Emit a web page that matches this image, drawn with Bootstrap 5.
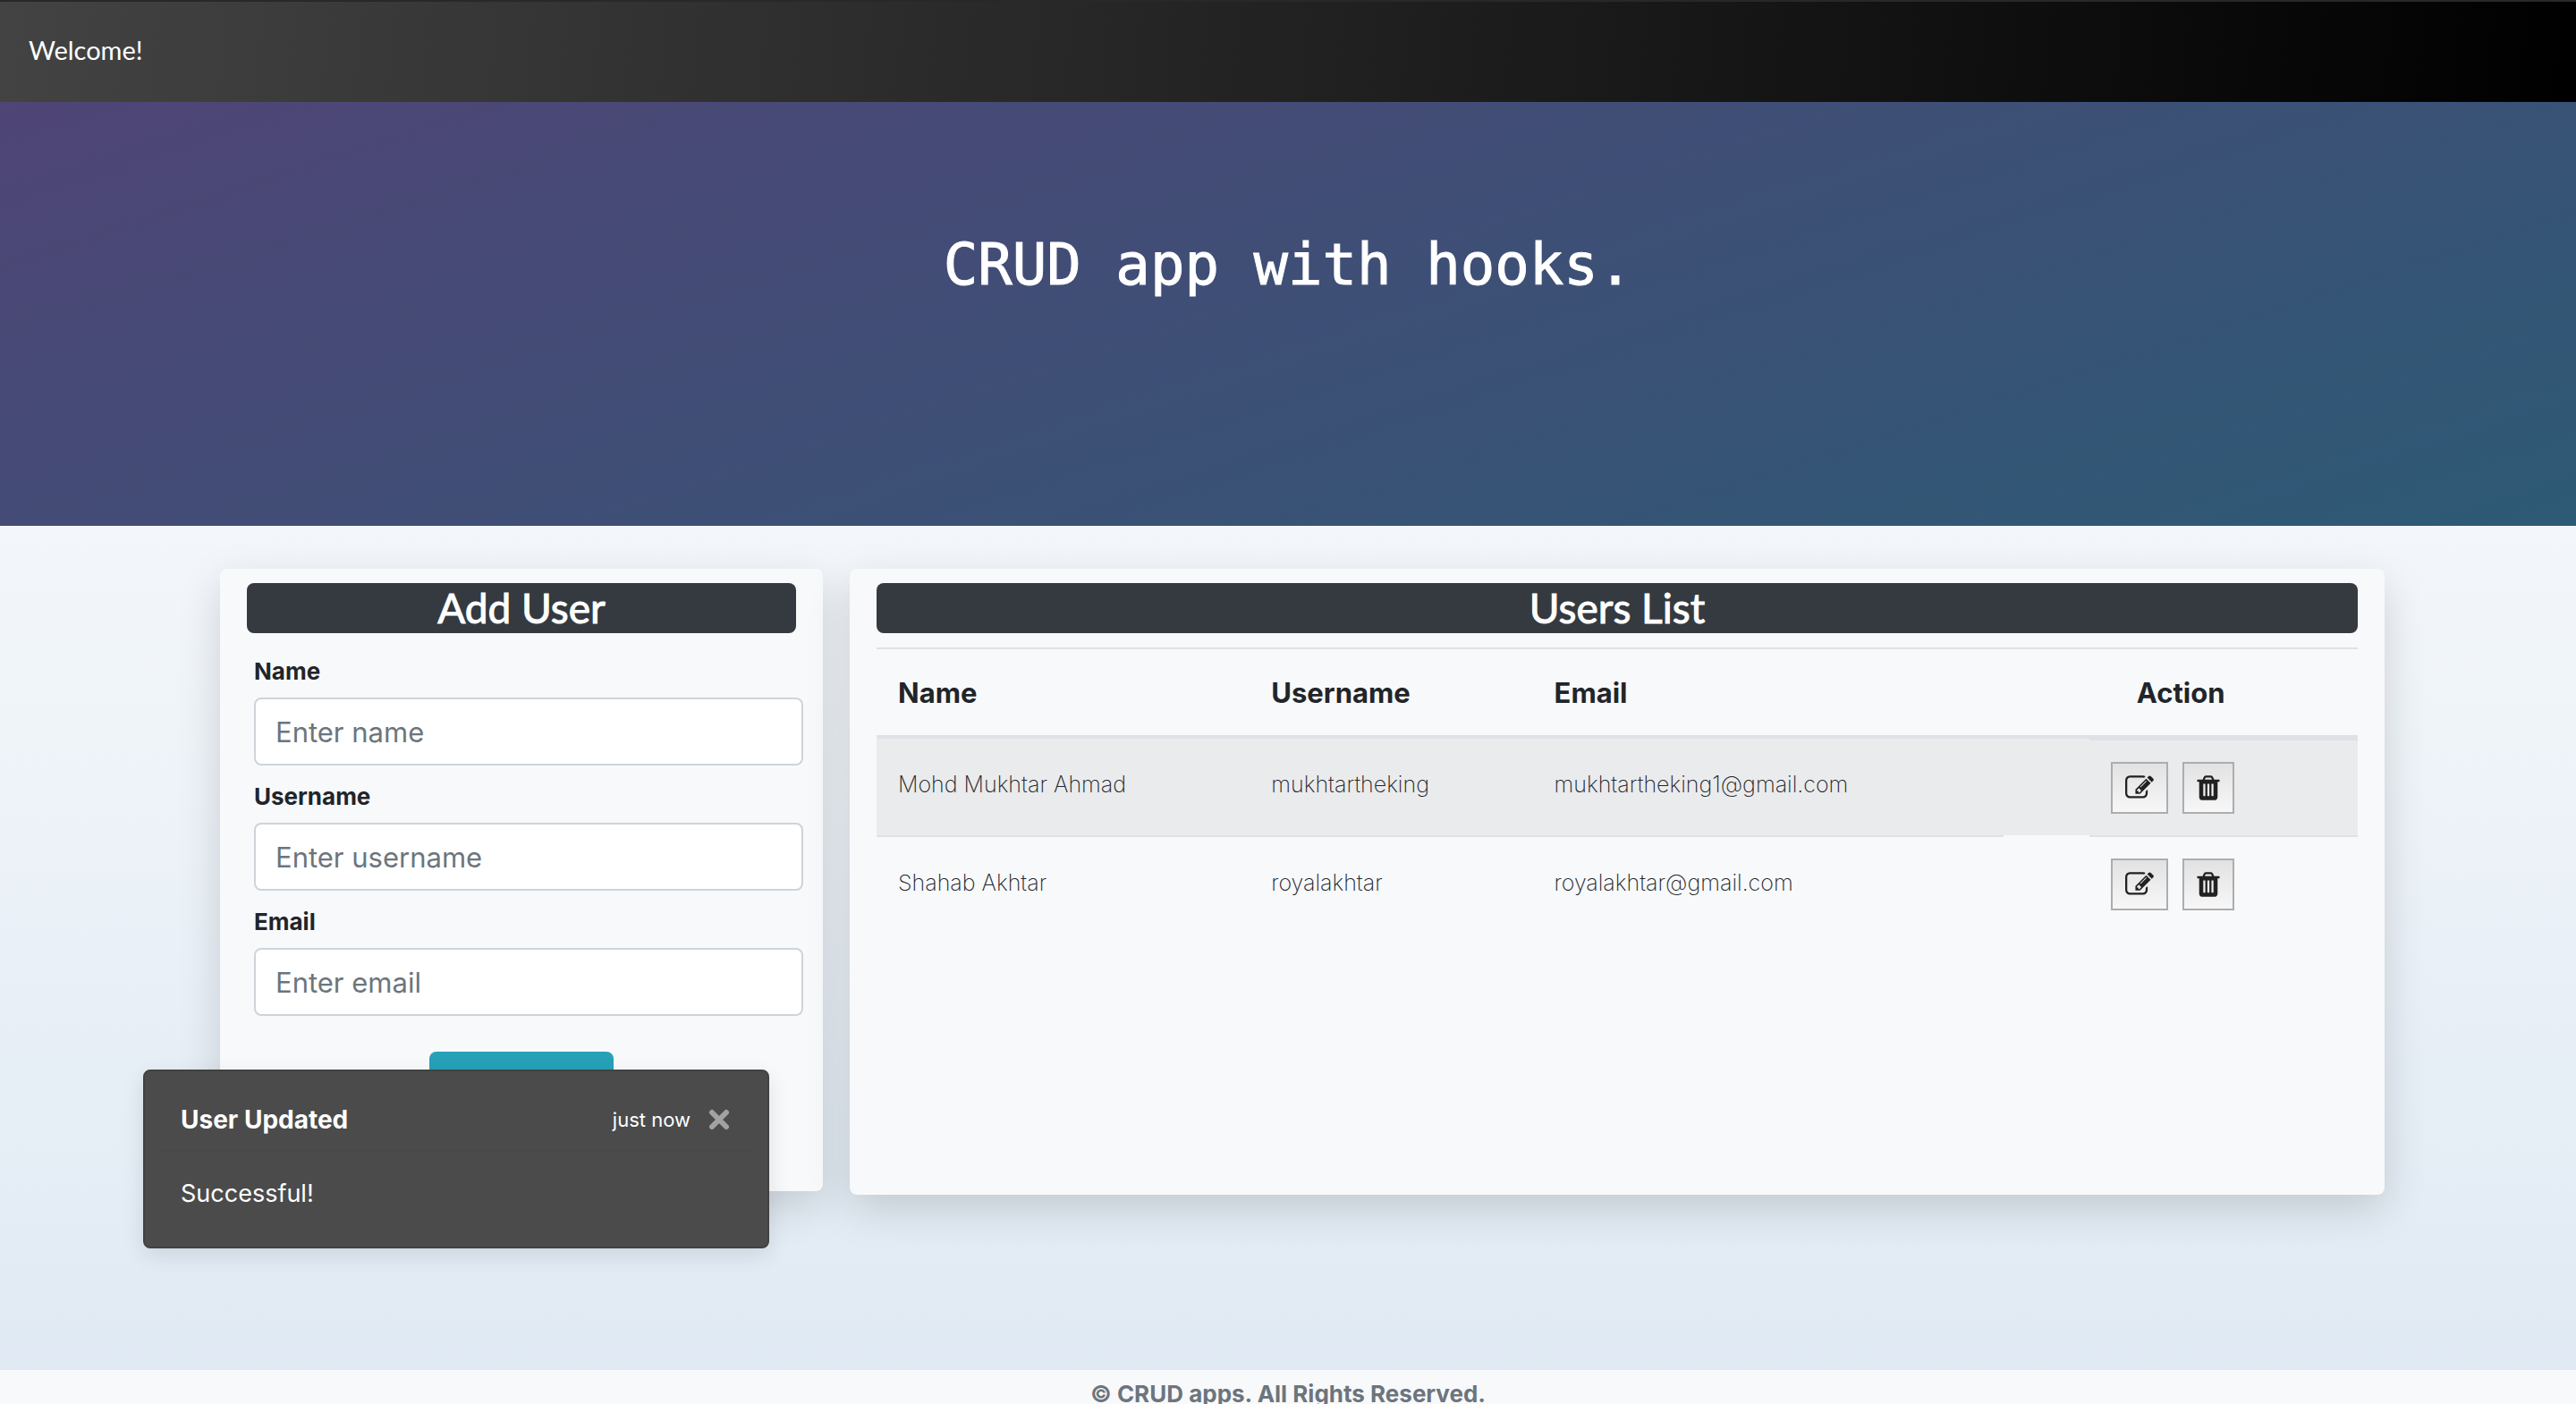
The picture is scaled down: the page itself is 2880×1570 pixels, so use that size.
<!DOCTYPE html>
<html lang="en">
<head>
<meta charset="utf-8">
<meta name="viewport" content="width=device-width, initial-scale=1">
<title>CRUD app with hooks</title>
<link href="https://cdn.jsdelivr.net/npm/bootstrap@5.3.0/dist/css/bootstrap.min.css" rel="stylesheet">
<style>
  html { font-size: 32px; }
  ::-webkit-scrollbar { display: none; }
  body { font-family: Inter, "Liberation Sans", sans-serif; color: #212529; background: linear-gradient(to top, #dfe9f3 0%, #fff 100%); min-height: 100vh; }
  .top-bar { background: linear-gradient(97deg, #434343 0%, #000 100%); border-top: 2px solid #282828; padding: 26px 32px 30px; min-height: 114px; }
  .brand-text { font: 400 29px/56px Lato, sans-serif; color: #fff; text-decoration: none; }
  .hero { background: linear-gradient(162deg, #4f4576 0%, #3e4f76 50%, #2d5a75 100%); min-height: 474px; padding-top: 144px; }
  .hero-title { font: 400 64px/77px "DejaVu Sans Mono", monospace; color: #fff; -webkit-text-stroke: 1px #fff; }
  .content-row { display: grid; grid-template-columns: 674fr 1716fr; align-items: start; padding: 48px 214px 196px 246px; gap: 30px; }
  .panel { background: #f8f9fb; border-radius: 8px; padding: 16px 30px; box-shadow: 0 16px 48px rgba(0,0,0,.15); }
  .form-panel { min-height: 696px; }
  .list-panel { min-height: 700px; }
  .panel-title { font: 400 46px/56px Lato, sans-serif; -webkit-text-stroke: 1px #fff; background: #343a40; color: #fff; border-radius: 8px; }
  .user-form { margin: 24px -8px 0 8px; }
  .user-form label { font-size: 26px; font-weight: 700; line-height: 38px; margin-bottom: 10px; }
  .user-form .form-control { height: 76px; font-size: 31px; border: 2px solid #ced4da; border-radius: 8px; padding: 0 22px; background: #fff; }
  .user-form .form-control::placeholder { color: #6c757d; }
  .field { margin-bottom: 16px; }
  .btn-send { width: 206px; height: 76px; background: #26a1b8; border-radius: 8px; margin-top: 24px; }
  .users { margin: 16px 0 0; table-layout: fixed; border-collapse: separate; border-spacing: 0; width: 100%; }
  .users th { font-size: 31px; font-weight: 700; line-height: 50px; padding: 24px 24px 22px; border-top: 2px solid #dee2e6; border-bottom: 4px solid #dee2e6; }
  .users td { font-size: 25px; font-weight: 200; line-height: 54px; padding: 24px; border-bottom: 2px solid #dee2e6; white-space: nowrap; vertical-align: top; }
  .users .shaded td { background: #eaebed; }
  .users tr:last-child td { border-bottom: 0; }
  .users td.spacer { border-bottom-color: #f8f9fb; }
  .users td.tools { line-height: 0; }
  .shaded td.tools { border-top: 2px solid #dee2e6; }
  .tool { height: 58px; width: 58px; padding: 0; border: 2px solid #acadaf; border-radius: 0; background: linear-gradient(#e2e2e2, #f7f7f7); }
  .tool-edit { width: 64px; }
  .tool svg { display: block; margin: 0 auto; }
  .site-footer { background: #f8f9fb; color: #6c757d; font-size: 26px; font-weight: 700; line-height: 38px; padding: 8px 0; }
  .notice { position: absolute; left: 160px; top: 1196px; width: 700px; min-height: 200px; background: #4b4b4b; border: 2px solid #424242; border-radius: 8px; padding: 16px; color: #fff; box-shadow: 0 8px 24px rgba(0,0,0,.1); }
  .notice-head { height: 74px; padding: 4px 26px 0 24px; border-bottom: 2px solid #484848; }
  .notice-head strong { font-size: 28px; }
  .notice-head small { font-size: 22px; }
  .notice-body { font-size: 27px; line-height: 42px; padding: 26px 24px 22px; }
  .notice-close { background: none; border: 0; padding: 0; margin-left: 20px; width: 24px; line-height: 0; }
</style>
<script src="https://cdn.jsdelivr.net/npm/bootstrap@5.3.0/dist/js/bootstrap.bundle.min.js"></script>
</head>
<body>
<svg width="0" height="0" class="position-absolute" aria-hidden="true">
  <symbol id="i-edit" viewBox="0 0 1792 1792"><path d="M888 1184l116-116-152-152-116 116v56h96v96h56zm440-720q-16-16-33 1l-350 350q-17 17-1 33t33-1l350-350q17-17 1-33zm80 594v190q0 119-84.500 203.500t-203.500 84.500h-832q-119 0-203.500-84.500t-84.500-203.500v-832q0-119 84.500-203.500t203.500-84.500h832q63 0 117 25 15 7 18 23 3 17-9 29l-49 49q-14 14-32 8-23-6-45-6h-832q-66 0-113 47t-47 113v832q0 66 47 113t113 47h832q66 0 113-47t47-113v-126q0-13 9-22l64-64q15-15 35-7t20 29zm-96-738l288 288-672 672h-288v-288zm444 132l-92 92-288-288 92-92q28-28 68-28t68 28l152 152q28 28 28 68t-28 68z"/></symbol>
  <symbol id="i-trash" viewBox="0 0 1792 1792"><path d="M704 1376v-704q0-14-9-23t-23-9h-64q-14 0-23 9t-9 23v704q0 14 9 23t23 9h64q14 0 23-9t9-23zm256 0v-704q0-14-9-23t-23-9h-64q-14 0-23 9t-9 23v704q0 14 9 23t23 9h64q14 0 23-9t9-23zm256 0v-704q0-14-9-23t-23-9h-64q-14 0-23 9t-9 23v704q0 14 9 23t23 9h64q14 0 23-9t9-23zm-544-992h448l-48-117q-7-9-17-11h-317q-10 2-17 11zm928 32v64q0 14-9 23t-23 9h-96v948q0 83-47 143.500t-113 60.500h-832q-66 0-113-58.500t-47-141.500v-952h-96q-14 0-23-9t-9-23v-64q0-14 9-23t23-9h309l70-167q15-37 54-63t79-26h320q40 0 79 26t54 63l70 167h309q14 0 23 9t9 23z"/></symbol>
</svg>
<nav class="top-bar d-flex align-items-center"><a class="brand-text" href="#">Welcome!</a></nav>
<header class="hero text-center"><h1 class="hero-title m-0">CRUD app with hooks.</h1></header>
<main class="content-row">
  <section class="panel form-panel">
    <h2 class="panel-title text-center m-0">Add User</h2>
    <form class="user-form">
      <div class="field"><label class="d-block" for="name">Name</label><input class="form-control" id="name" type="text" placeholder="Enter name"></div>
      <div class="field"><label class="d-block" for="username">Username</label><input class="form-control" id="username" type="text" placeholder="Enter username"></div>
      <div class="field"><label class="d-block" for="email">Email</label><input class="form-control" id="email" type="email" placeholder="Enter email"></div>
      <div class="d-flex justify-content-center pe-2"><button class="btn btn-send" type="submit" aria-label="Add"></button></div>
    </form>
  </section>
  <section class="panel list-panel">
    <h2 class="panel-title text-center m-0">Users List</h2>
    <table class="users">
      <colgroup><col style="width:25.2%"><col style="width:19.1%"><col style="width:31.8%"><col style="width:5.8%"><col></colgroup>
      <thead><tr><th>Name</th><th>Username</th><th>Email</th><th colspan="2" class="text-center">Action</th></tr></thead>
      <tbody>
        <tr class="shaded"><td>Mohd Mukhtar Ahmad</td><td>mukhtartheking</td><td>mukhtartheking1@gmail.com</td><td class="spacer"></td>
          <td class="tools"><div class="d-flex gap-2"><button class="tool tool-edit" type="button" aria-label="Edit"><svg width="32" height="32" fill="#212121"><use href="#i-edit"/></svg></button><button class="tool" type="button" aria-label="Delete"><svg width="32" height="32" fill="#212121"><use href="#i-trash"/></svg></button></div></td></tr>
        <tr><td>Shahab Akhtar</td><td>royalakhtar</td><td>royalakhtar@gmail.com</td><td class="spacer"></td>
          <td class="tools"><div class="d-flex gap-2"><button class="tool tool-edit" type="button" aria-label="Edit"><svg width="32" height="32" fill="#212121"><use href="#i-edit"/></svg></button><button class="tool" type="button" aria-label="Delete"><svg width="32" height="32" fill="#212121"><use href="#i-trash"/></svg></button></div></td></tr>
      </tbody>
    </table>
  </section>
</main>
<footer class="site-footer text-center">© CRUD apps. All Rights Reserved.</footer>
<div class="notice" role="status">
  <div class="notice-head d-flex align-items-center"><strong class="me-auto">User Updated</strong><small>just now</small><button class="notice-close" type="button" aria-label="Close"><svg width="24" height="24" viewBox="0 0 24 24" stroke="#a2a2a2" stroke-width="6" stroke-linecap="round"><path d="M4 4L20 20M20 4L4 20"/></svg></button></div>
  <div class="notice-body">Successful!</div>
</div>
</body>
</html>
